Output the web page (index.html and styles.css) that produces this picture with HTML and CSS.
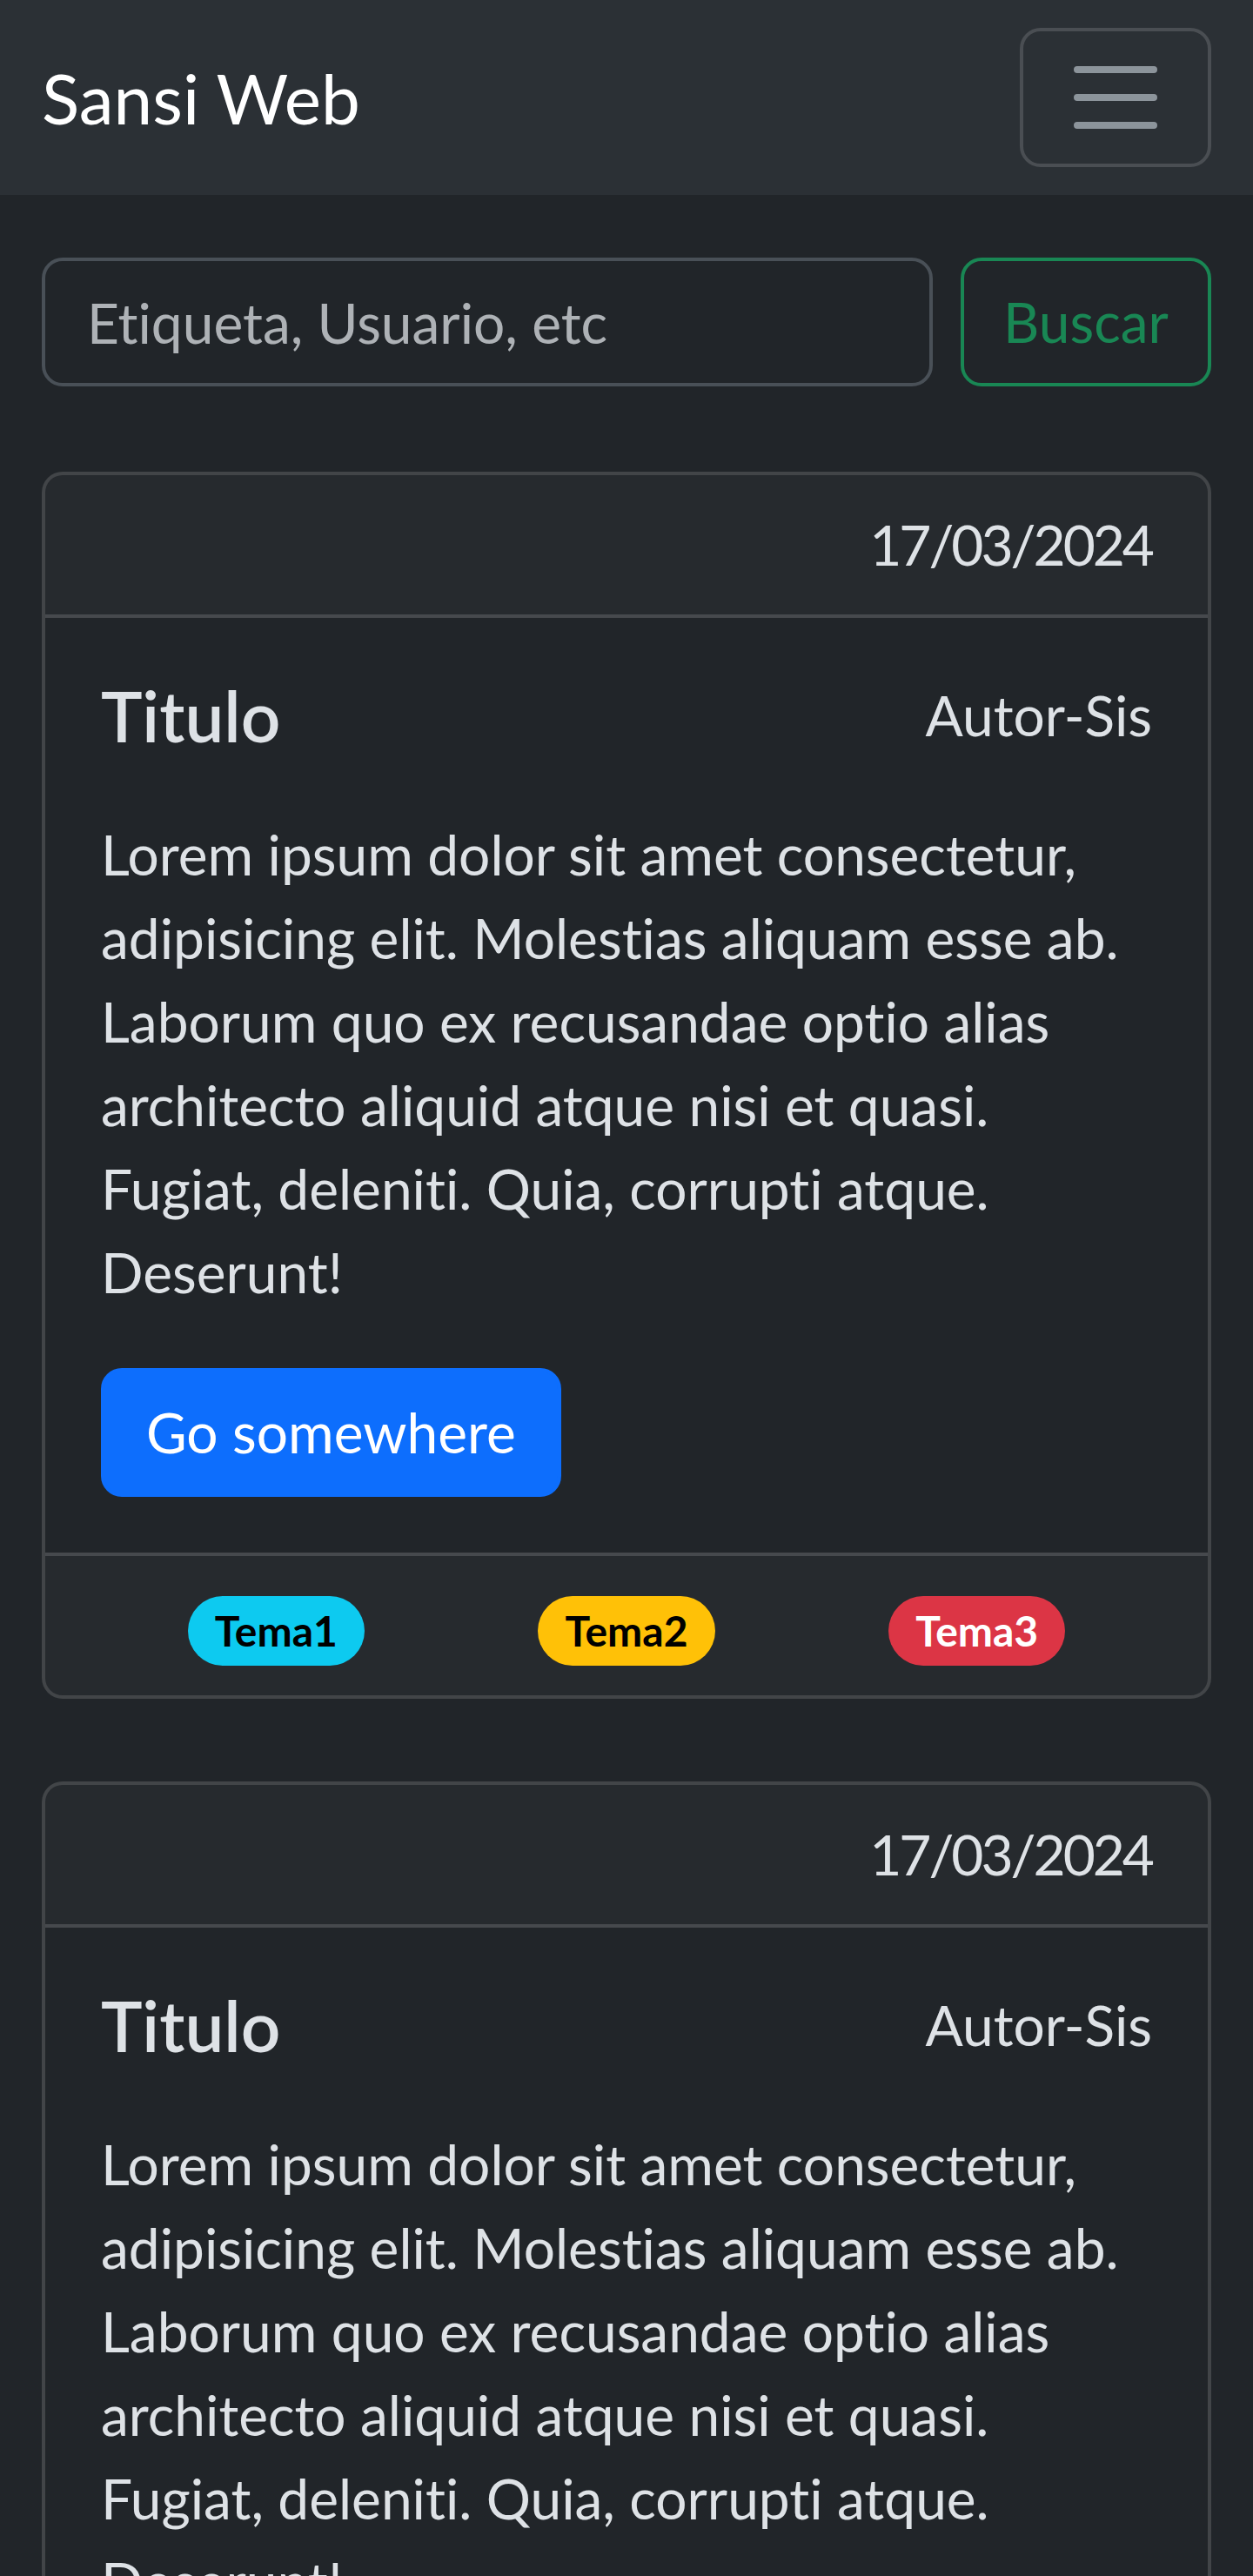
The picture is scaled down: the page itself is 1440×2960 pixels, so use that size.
FILE: index.html
```html
<!DOCTYPE html>
<html lang="es">
<head>
<meta charset="utf-8">
<title>Sansi Web</title>
<link rel="stylesheet" href="styles.css">
</head>
<body>
<nav class="navbar">
  <div class="nav-inner">
    <a class="brand" href="#">Sansi Web</a>
    <button class="toggler" type="button" aria-label="Menu">
      <svg class="toggler-icon" viewBox="0 0 30 30" xmlns="http://www.w3.org/2000/svg"><path d="M4 7h22M4 15h22M4 23h22" stroke="rgba(173,181,189,0.75)" stroke-width="2" stroke-linecap="round" stroke-miterlimit="10" fill="none"/></svg>
    </button>
  </div>
</nav>

<main class="container">
  <form class="search">
    <input class="search-input" type="search" placeholder="Etiqueta, Usuario, etc">
    <button class="btn btn-outline-success" type="button">Buscar</button>
  </form>

  <article class="card">
    <div class="card-header"><span class="date">17/03/2024</span></div>
    <div class="card-body">
      <div class="title-row">
        <h5 class="card-title">Titulo</h5>
        <span class="author">Autor-Sis</span>
      </div>
      <p class="card-text">Lorem ipsum dolor sit amet consectetur, adipisicing elit. Molestias aliquam esse ab. Laborum quo ex recusandae optio alias architecto aliquid atque nisi et quasi. Fugiat, deleniti. Quia, corrupti atque. Deserunt!</p>
      <a href="#" class="btn btn-primary">Go somewhere</a>
    </div>
    <div class="card-footer">
      <div class="tag-col"><span class="badge badge-info">Tema1</span></div>
      <div class="tag-col"><span class="badge badge-warning">Tema2</span></div>
      <div class="tag-col"><span class="badge badge-danger">Tema3</span></div>
    </div>
  </article>

  <article class="card">
    <div class="card-header"><span class="date">17/03/2024</span></div>
    <div class="card-body">
      <div class="title-row">
        <h5 class="card-title">Titulo</h5>
        <span class="author">Autor-Sis</span>
      </div>
      <p class="card-text">Lorem ipsum dolor sit amet consectetur, adipisicing elit. Molestias aliquam esse ab. Laborum quo ex recusandae optio alias architecto aliquid atque nisi et quasi. Fugiat, deleniti. Quia, corrupti atque. Deserunt!</p>
      <a href="#" class="btn btn-primary">Go somewhere</a>
    </div>
    <div class="card-footer">
      <div class="tag-col"><span class="badge badge-info">Tema1</span></div>
      <div class="tag-col"><span class="badge badge-warning">Tema2</span></div>
      <div class="tag-col"><span class="badge badge-danger">Tema3</span></div>
    </div>
  </article>
</main>
</body>
</html>
```
FILE: styles.css
```css
*, *::before, *::after { box-sizing: border-box; }

html { background: #212529; }

body {
  margin: 0;
  background: #212529;
  color: #dee2e6;
  font-family: "Lato", "Open Sans", "Noto Sans", sans-serif;
  font-size: 64px;
  line-height: 1.5;
  font-variant-ligatures: none;
  font-feature-settings: "liga" 0, "clig" 0;
}

input, button {
  font-variant-ligatures: none;
  font-feature-settings: "liga" 0, "clig" 0;
}

/* Navbar */
.navbar {
  background: #2b3035;
  padding: 32px 0;
}
.nav-inner {
  display: flex;
  align-items: center;
  justify-content: space-between;
  padding: 0 48px;
}
.brand {
  color: #fff;
  text-decoration: none;
  font-size: 80px;
  line-height: 1.5;
  padding: 20px 0;
  margin-right: 64px;
}
.toggler {
  display: flex;
  align-items: center;
  justify-content: center;
  width: 220px;
  height: 160px;
  padding: 0;
  background: transparent;
  border: 4px solid rgba(255, 255, 255, 0.15);
  border-radius: 24px;
}
.toggler-icon {
  width: 120px;
  height: 120px;
  display: block;
}

/* Layout */
.container {
  padding: 0 48px;
}

/* Search */
.search {
  display: flex;
  margin-top: 72px;
}
.search-input {
  flex: 1;
  min-width: 0;
  margin-right: 32px;
  height: 148px;
  padding: 0 48px;
  font: inherit;
  color: #dee2e6;
  background: #212529;
  border: 4px solid #495057;
  border-radius: 24px;
  outline: none;
}
.search-input::placeholder {
  color: rgba(222, 226, 230, 0.75);
  opacity: 1;
}

/* Buttons */
.btn {
  display: inline-block;
  font: inherit;
  line-height: 1.5;
  padding: 22px 48px;
  border: 4px solid transparent;
  border-radius: 24px;
  text-decoration: none;
  text-align: center;
  background: transparent;
}
.btn-outline-success {
  color: #198754;
  border-color: #198754;
  width: 288px;
  padding-left: 0;
  padding-right: 0;
}
.btn-primary {
  color: #fff;
  background: #0d6efd;
  border-color: #0d6efd;
}

/* Cards */
.card {
  margin-top: 98px;
  border: 4px solid rgba(255, 255, 255, 0.15);
  border-radius: 24px;
  background: #212529;
  overflow: hidden;
}
.card + .card {
  margin-top: 95px;
}
.card-header {
  padding: 32px 64px;
  text-align: right;
  background: rgba(222, 226, 230, 0.03);
  border-bottom: 4px solid rgba(255, 255, 255, 0.15);
}
.date {
  letter-spacing: -3px;
}
.card-body {
  padding: 64px;
}
.title-row {
  display: flex;
  align-items: center;
  justify-content: space-between;
  margin-bottom: 64px;
}
.card-title {
  margin: 0;
  font-size: 80px;
  font-weight: 600;
  line-height: 1.2;
}
.author {
  line-height: 1.5;
}
.card-text {
  margin: 0 0 62px;
}
.card-footer {
  display: grid;
  grid-template-columns: 1fr 1fr 1fr;
  padding: 32px 64px;
  background: rgba(222, 226, 230, 0.03);
  border-top: 4px solid rgba(255, 255, 255, 0.15);
}
.tag-col {
  text-align: center;
}

/* Badges */
.badge {
  display: inline-block;
  padding: 16px 31px;
  font-size: 48px;
  font-weight: 700;
  line-height: 1;
  border-radius: 800px;
  vertical-align: baseline;
}
.badge-info { background: #0dcaf0; color: #000; }
.badge-warning { background: #ffc107; color: #000; }
.badge-danger { background: #dc3545; color: #fff; }
```
